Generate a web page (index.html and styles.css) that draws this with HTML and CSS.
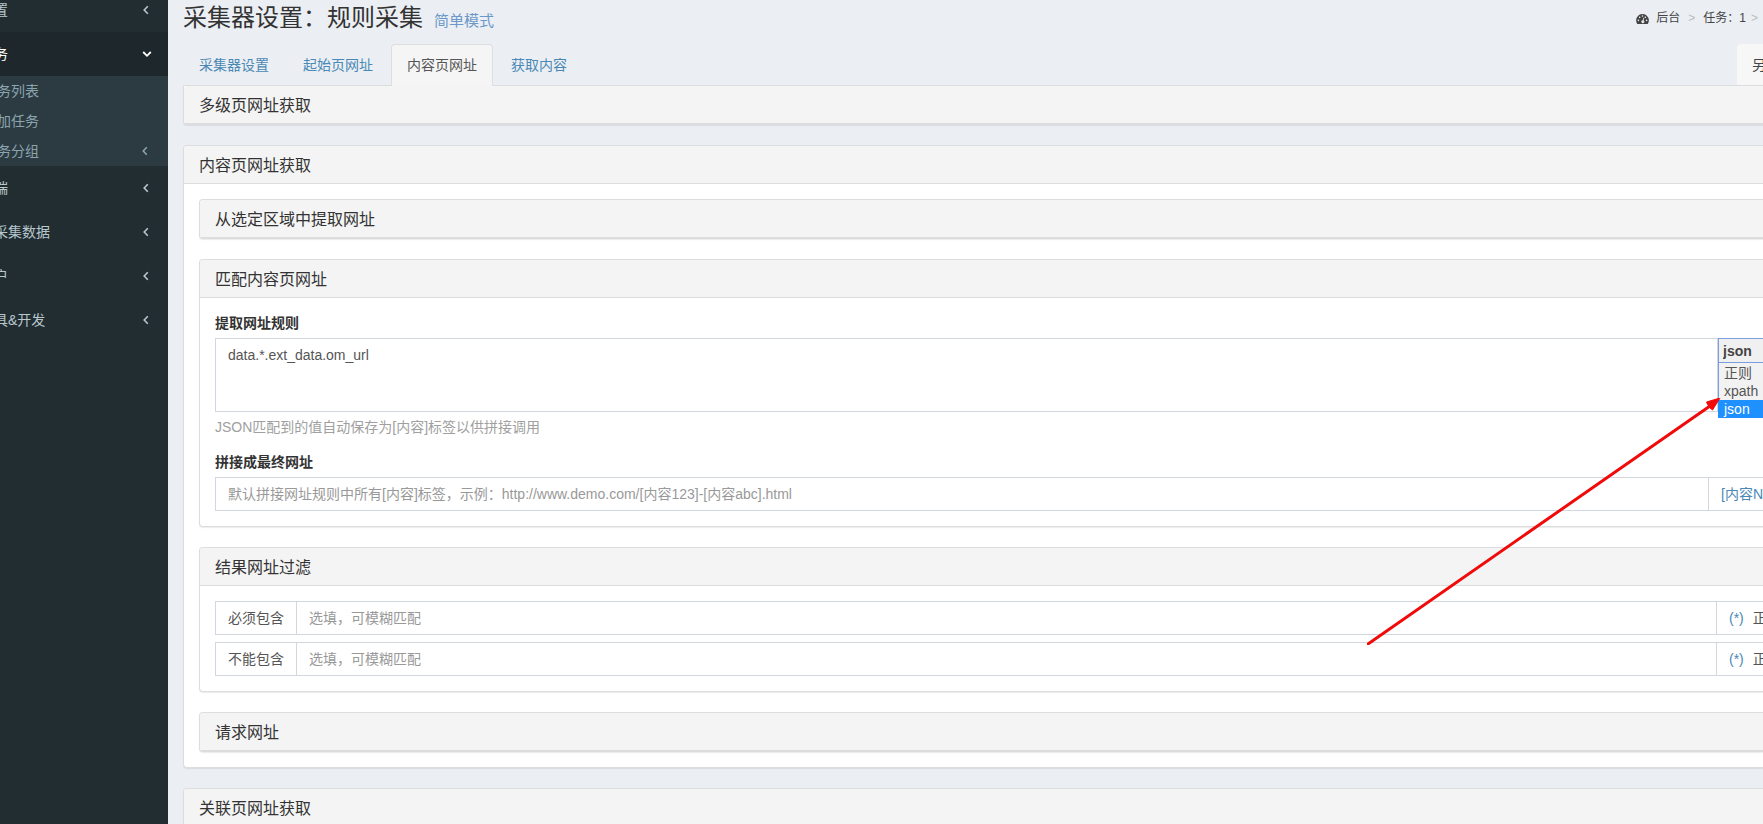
FILE: index.html
```html
<!DOCTYPE html>
<html lang="zh-CN">
<head>
<meta charset="utf-8">
<title>采集器设置</title>
<link rel="stylesheet" href="styles.css">
</head>
<body>
<svg class="defs" aria-hidden="true">
  <symbol id="angle-left" viewBox="0 0 8 10"><path d="M5.8 1.2 2.2 5l3.600 3.800" fill="none" stroke="currentColor" stroke-width="1.600"/></symbol>
  <symbol id="angle-down" viewBox="0 0 10 8"><path d="M1.200 2 5 5.800 8.800 2" fill="none" stroke="currentColor" stroke-width="1.800"/></symbol>
</svg>
<div class="layout">
  <aside class="sidebar">
    <ul class="menu">
      <li><a class="menu-link" href="#">置<svg class="angle"><use href="#angle-left"/></svg></a></li>
      <li>
        <a class="menu-link active" href="#">务<svg class="angle-open"><use href="#angle-down"/></svg></a>
        <ul class="submenu">
          <li><a class="submenu-link" href="#">务列表</a></li>
          <li><a class="submenu-link" href="#">加任务</a></li>
          <li><a class="submenu-link" href="#">务分组<svg class="angle"><use href="#angle-left"/></svg></a></li>
        </ul>
      </li>
      <li><a class="menu-link" href="#">端<svg class="angle"><use href="#angle-left"/></svg></a></li>
      <li><a class="menu-link" href="#">采集数据<svg class="angle"><use href="#angle-left"/></svg></a></li>
      <li><a class="menu-link" href="#">户<svg class="angle"><use href="#angle-left"/></svg></a></li>
      <li><a class="menu-link" href="#">具&amp;开发<svg class="angle"><use href="#angle-left"/></svg></a></li>
    </ul>
  </aside>
  <main class="content">
    <header class="page-header">
      <h1 class="page-title">采集器设置：规则采集 <a class="mode-link" href="#">简单模式</a></h1>
      <ol class="breadcrumb">
        <li><a href="#"><svg class="gauge" viewBox="0 0 14 12"><path d="M7 1a7 7 0 0 0-5.900 10.600c.1.200.4.400.7.400h10.400c.3 0 .6-.2.700-.4A7 7 0 0 0 7 1z" fill="currentColor"/><g fill="#ebeff4"><circle cx="2.500" cy="8" r=".9"/><circle cx="3.900" cy="4.700" r=".9"/><circle cx="7" cy="3.300" r=".9"/><circle cx="10.100" cy="4.700" r=".9"/><circle cx="11.500" cy="8" r=".9"/><path d="M7.300 8 8 5.200l.8.200-.7 2.800a1.500 1.500 0 1 1-.8-.2z"/></g></svg>后台</a></li>
        <li class="sep">&gt;</li>
        <li><a href="#">任务：1</a></li>
        <li class="sep last">&gt;</li>
      </ol>
    </header>
    <nav class="tabs">
      <a class="tab" href="#">采集器设置</a>
      <a class="tab" href="#">起始页网址</a>
      <a class="tab current" href="#">内容页网址</a>
      <a class="tab" href="#">获取内容</a>
      <button class="save-as" type="button">另</button>
    </nav>
    <section class="panel first"><h2 class="panel-heading">多级页网址获取</h2></section>
    <section class="panel">
      <h2 class="panel-heading">内容页网址获取</h2>
      <div class="panel-body">
        <section class="panel"><h3 class="panel-heading">从选定区域中提取网址</h3></section>
        <section class="panel">
          <h3 class="panel-heading">匹配内容页网址</h3>
          <div class="panel-body">
            <div class="form-group">
              <label class="field-label" for="rule">提取网址规则</label>
              <div class="rule-row">
                <textarea class="control" id="rule" rows="3">data.*.ext_data.om_url</textarea>
                <div class="type-picker">
                  <select class="type-select" aria-label="规则类型"><option>json</option></select>
                  <ul class="type-list" role="listbox">
                    <li role="option">正则</li>
                    <li role="option">xpath</li>
                    <li class="chosen" role="option" aria-selected="true">json</li>
                  </ul>
                </div>
              </div>
              <p class="help">JSON匹配到的值自动保存为[内容]标签以供拼接调用</p>
            </div>
            <div class="form-group">
              <label class="field-label" for="final">拼接成最终网址</label>
              <div class="input-group">
                <input class="control" id="final" type="text" placeholder="默认拼接网址规则中所有[内容]标签，示例：http://www.demo.com/[内容123]-[内容abc].html">
                <span class="addon-end wide"><a href="#">[内容N</a></span>
              </div>
            </div>
          </div>
        </section>
        <section class="panel">
          <h3 class="panel-heading">结果网址过滤</h3>
          <div class="panel-body filters">
            <div class="input-group">
              <label class="addon" for="must">必须包含</label>
              <input class="control" id="must" type="text" placeholder="选填，可模糊匹配">
              <span class="addon-end"><a href="#">(*)</a>正</span>
            </div>
            <div class="input-group">
              <label class="addon" for="ban">不能包含</label>
              <input class="control" id="ban" type="text" placeholder="选填，可模糊匹配">
              <span class="addon-end"><a href="#">(*)</a>正</span>
            </div>
          </div>
        </section>
        <section class="panel"><h3 class="panel-heading">请求网址</h3></section>
      </div>
    </section>
    <section class="panel"><h2 class="panel-heading">关联页网址获取</h2></section>
  </main>
</div>
<svg class="arrow" viewBox="0 0 354 247" aria-hidden="true"><path d="M1 246 343 8" stroke="#f00a0a" stroke-width="3" stroke-linecap="round"/><path d="M353 0 345.500 12 342 9 339.500 4z" fill="#f00a0a" stroke="#f00a0a"/></svg>
</body>
</html>
```

FILE: styles.css
```css
* { box-sizing: border-box; }
body {
  margin: 0;
  height: 100vh;
  overflow: hidden;
  position: relative;
  background: #ebeff4;
  color: #333;
  font: 14px/20px "Liberation Sans", "Noto Sans CJK SC", sans-serif;
}
ul, ol { list-style: none; margin: 0; padding: 0; }
a { color: #4a88b5; text-decoration: none; }
h1, h2, h3, p { margin: 0; font-weight: 400; }
input, textarea, select, button { font: inherit; color: inherit; margin: 0; }
.defs { display: none; }

.layout { display: grid; grid-template-columns: 168px minmax(0, 1fr); min-height: 100vh; }

.sidebar { background: #222d32; overflow: hidden; }
.menu { margin: -12px 0 0 -6px; }
.menu-link, .submenu-link { display: flex; align-items: center; justify-content: space-between; white-space: nowrap; }
.menu-link { height: 44px; padding-right: 18px; color: #b8c7ce; }
.menu-link.active { background: #1e282c; color: #fff; padding-right: 16px; }
.submenu { background: #2c3b41; }
.submenu-link { height: 30px; padding: 0 19px 0 3px; color: #8aa4af; }
.angle { width: 8px; height: 10px; }
.angle-open { width: 10px; height: 8px; }

.content { padding-left: 15px; }
.page-header { display: flex; justify-content: space-between; align-items: flex-start; padding: 6px 5px 14px 0; }
.page-title { display: flex; align-items: baseline; gap: 11px; height: 24px; font-size: 24px; line-height: 24px; }
.mode-link { font-size: 15px; color: #6b98c8; }
.breadcrumb { display: flex; font-size: 12px; line-height: 24px; }
.breadcrumb a { display: flex; align-items: center; gap: 7px; color: #444; }
.gauge { width: 13px; height: 11px; }
.sep { color: #bbb; padding: 0 8px; }
.sep.last { padding: 0 0 0 5px; }

.tabs { display: flex; gap: 2px; }
.tab { border: 1px solid transparent; border-bottom: 0; border-radius: 4px 4px 0 0; padding: 10px 15px; }
.tab.current { position: relative; z-index: 1; background: #f5f5f5; border-color: #dcdee0; color: #555; margin-bottom: -1px; padding-bottom: 11px; }
.save-as { margin-left: auto; width: 26px; overflow: hidden; border: 0; border-radius: 4px 0 0 0; background: #f7f7f7; color: #444; padding: 0 0 0 15px; text-align: left; }

.panel { background: #fff; border: 1px solid #dcdddf; border-right: 0; border-radius: 4px 0 0 4px; box-shadow: 0 1px 1px rgba(0, 0, 0, .08); margin-bottom: 20px; }
.panel.first { border-top-left-radius: 0; }
.panel:last-child { margin-bottom: 0; }
.panel-heading { background: #f4f4f4; border-bottom: 1px solid #dcdddf; border-radius: 3px 0 0 0; padding: 11px 15px 9px; font-size: 16px; line-height: 17px; }
.panel-body { padding: 15px 0 15px 15px; }

.form-group + .form-group { margin-top: 15px; }
.field-label { display: block; font-weight: 700; margin-bottom: 5px; }
.control { display: block; width: 100%; min-width: 0; background: #fff; border: 1px solid #d2d6de; border-radius: 0; padding: 6px 12px; line-height: 20px; color: #555; outline: 0; resize: none; }
.control::placeholder { color: #999; opacity: 1; }
.rule-row { display: grid; grid-template-columns: minmax(0, 1fr) 45px; }
.type-picker { position: relative; }
.type-select { appearance: none; display: block; width: 100%; height: 25px; border: 1px solid #7a9fe0; border-right: 0; border-radius: 0; background: #f0f0f0; color: #444; font-weight: 700; padding: 0 0 0 4px; outline: 0; }
.type-list { position: absolute; top: 25px; left: 0; right: 0; background: #f2f2f2; border: 1px solid #7a9fe0; border-width: 0 0 0 1px; padding-top: 1px; color: #555; line-height: 18px; }
.type-list li { padding-left: 5px; }
.type-list .chosen { background: #1e90ff; color: #fff; margin-left: -1px; padding-left: 6px; }
.help { color: #a0a0a0; margin-top: 5px; }

.input-group { display: flex; }
.input-group .control { flex: 1; height: 34px; }
.addon, .addon-end { flex: none; border: 1px solid #d2d6de; padding: 6px 12px; color: #555; white-space: nowrap; }
.addon { border-right: 0; }
.addon-end { width: 46px; border-width: 1px 0; padding-right: 0; overflow: hidden; }
.addon-end.wide { width: 54px; }
.addon-end a { margin-right: 9px; }
.filters { display: grid; gap: 7px; }

.arrow { position: absolute; right: 42px; top: 398px; width: 354px; height: 247px; fill: none; pointer-events: none; }
```
